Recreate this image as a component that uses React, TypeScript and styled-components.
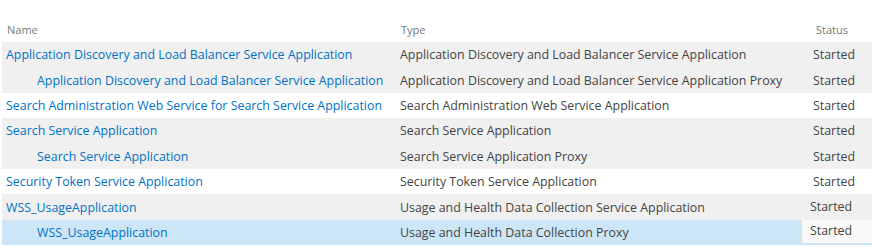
import styled, { createGlobalStyle } from 'styled-components';

type Row = {
  name: string;
  type: string;
  child?: boolean;
  tone: 'grey' | 'white' | 'blue';
  shifted?: boolean;
};

const rows: Row[] = [
  { name: 'Application Discovery and Load Balancer Service Application', type: 'Application Discovery and Load Balancer Service Application', tone: 'grey' },
  { name: 'Application Discovery and Load Balancer Service Application', type: 'Application Discovery and Load Balancer Service Application Proxy', child: true, tone: 'grey' },
  { name: 'Search Administration Web Service for Search Service Application', type: 'Search Administration Web Service Application', tone: 'white' },
  { name: 'Search Service Application', type: 'Search Service Application', tone: 'grey' },
  { name: 'Search Service Application', type: 'Search Service Application Proxy', child: true, tone: 'grey' },
  { name: 'Security Token Service Application', type: 'Security Token Service Application', tone: 'white' },
  { name: 'WSS_UsageApplication', type: 'Usage and Health Data Collection Service Application', tone: 'grey', shifted: true },
  { name: 'WSS_UsageApplication', type: 'Usage and Health Data Collection Proxy', child: true, tone: 'blue', shifted: true },
];

const tones = {
  grey: '#f0f0f0',
  white: '#ffffff',
  blue: '#cde6f7',
};

const GlobalStyle = createGlobalStyle`
  body {
    margin: 0;
    background: #ffffff;
    font-family: "Open Sans", "Noto Sans", sans-serif;
  }
`;

export default function App() {
  return (
    <>
      <GlobalStyle />
      <Table>
        <HeaderRow>
          <HeadCell>Name</HeadCell>
          <HeadCell>Type</HeadCell>
          <HeadCell $status>Status</HeadCell>
        </HeaderRow>
        {rows.map((row, i) => (
          <DataRow key={i} $tone={row.tone}>
            <NameCell $child={row.child}>
              <Link href="#">{row.name}</Link>
            </NameCell>
            <TypeCell>{row.type}</TypeCell>
            <StatusCell $shifted={row.shifted} $boxed={row.tone === 'blue'}>
              Started
            </StatusCell>
          </DataRow>
        ))}
      </Table>
    </>
  );
}

const Table = styled.div`
  display: flex;
  flex-direction: column;
  width: 870px;
  margin-left: 2px;
  padding-top: 19px;
`;

const Columns = styled.div`
  display: grid;
  grid-template-columns: 394px 413px 1fr;
  align-items: center;
`;

const HeaderRow = styled(Columns)`
  height: 23px;
`;

const HeadCell = styled.div<{ $status?: boolean }>`
  font-size: 11px;
  color: #777777;
  padding-left: ${({ $status }) => ($status ? '7px' : '5px')};
  padding-bottom: 3px;
`;

const DataRow = styled(Columns)<{ $tone: Row['tone'] }>`
  height: 25.4px;
  background: ${({ $tone }) => tones[$tone]};
  font-size: 12.4px;
  color: #444444;
  white-space: nowrap;
`;

const NameCell = styled.div<{ $child?: boolean }>`
  padding-left: ${({ $child }) => ($child ? '35px' : '4px')};
`;

const Link = styled.a`
  color: #0072c6;
  text-decoration: none;
`;

const TypeCell = styled.div`
  padding-left: 4px;
`;

const StatusCell = styled.div<{ $shifted?: boolean; $boxed?: boolean }>`
  align-self: stretch;
  display: flex;
  align-items: center;
  padding-left: ${({ $shifted }) => ($shifted ? '1px' : '4px')};
  padding-bottom: ${({ $shifted }) => ($shifted ? '2px' : '0')};
  ${({ $boxed }) =>
    $boxed &&
    `
    align-self: start;
    background: #f9f9f9;
    margin-left: -7px;
    padding-left: 8px;
    height: 21px;
  `}
`;
